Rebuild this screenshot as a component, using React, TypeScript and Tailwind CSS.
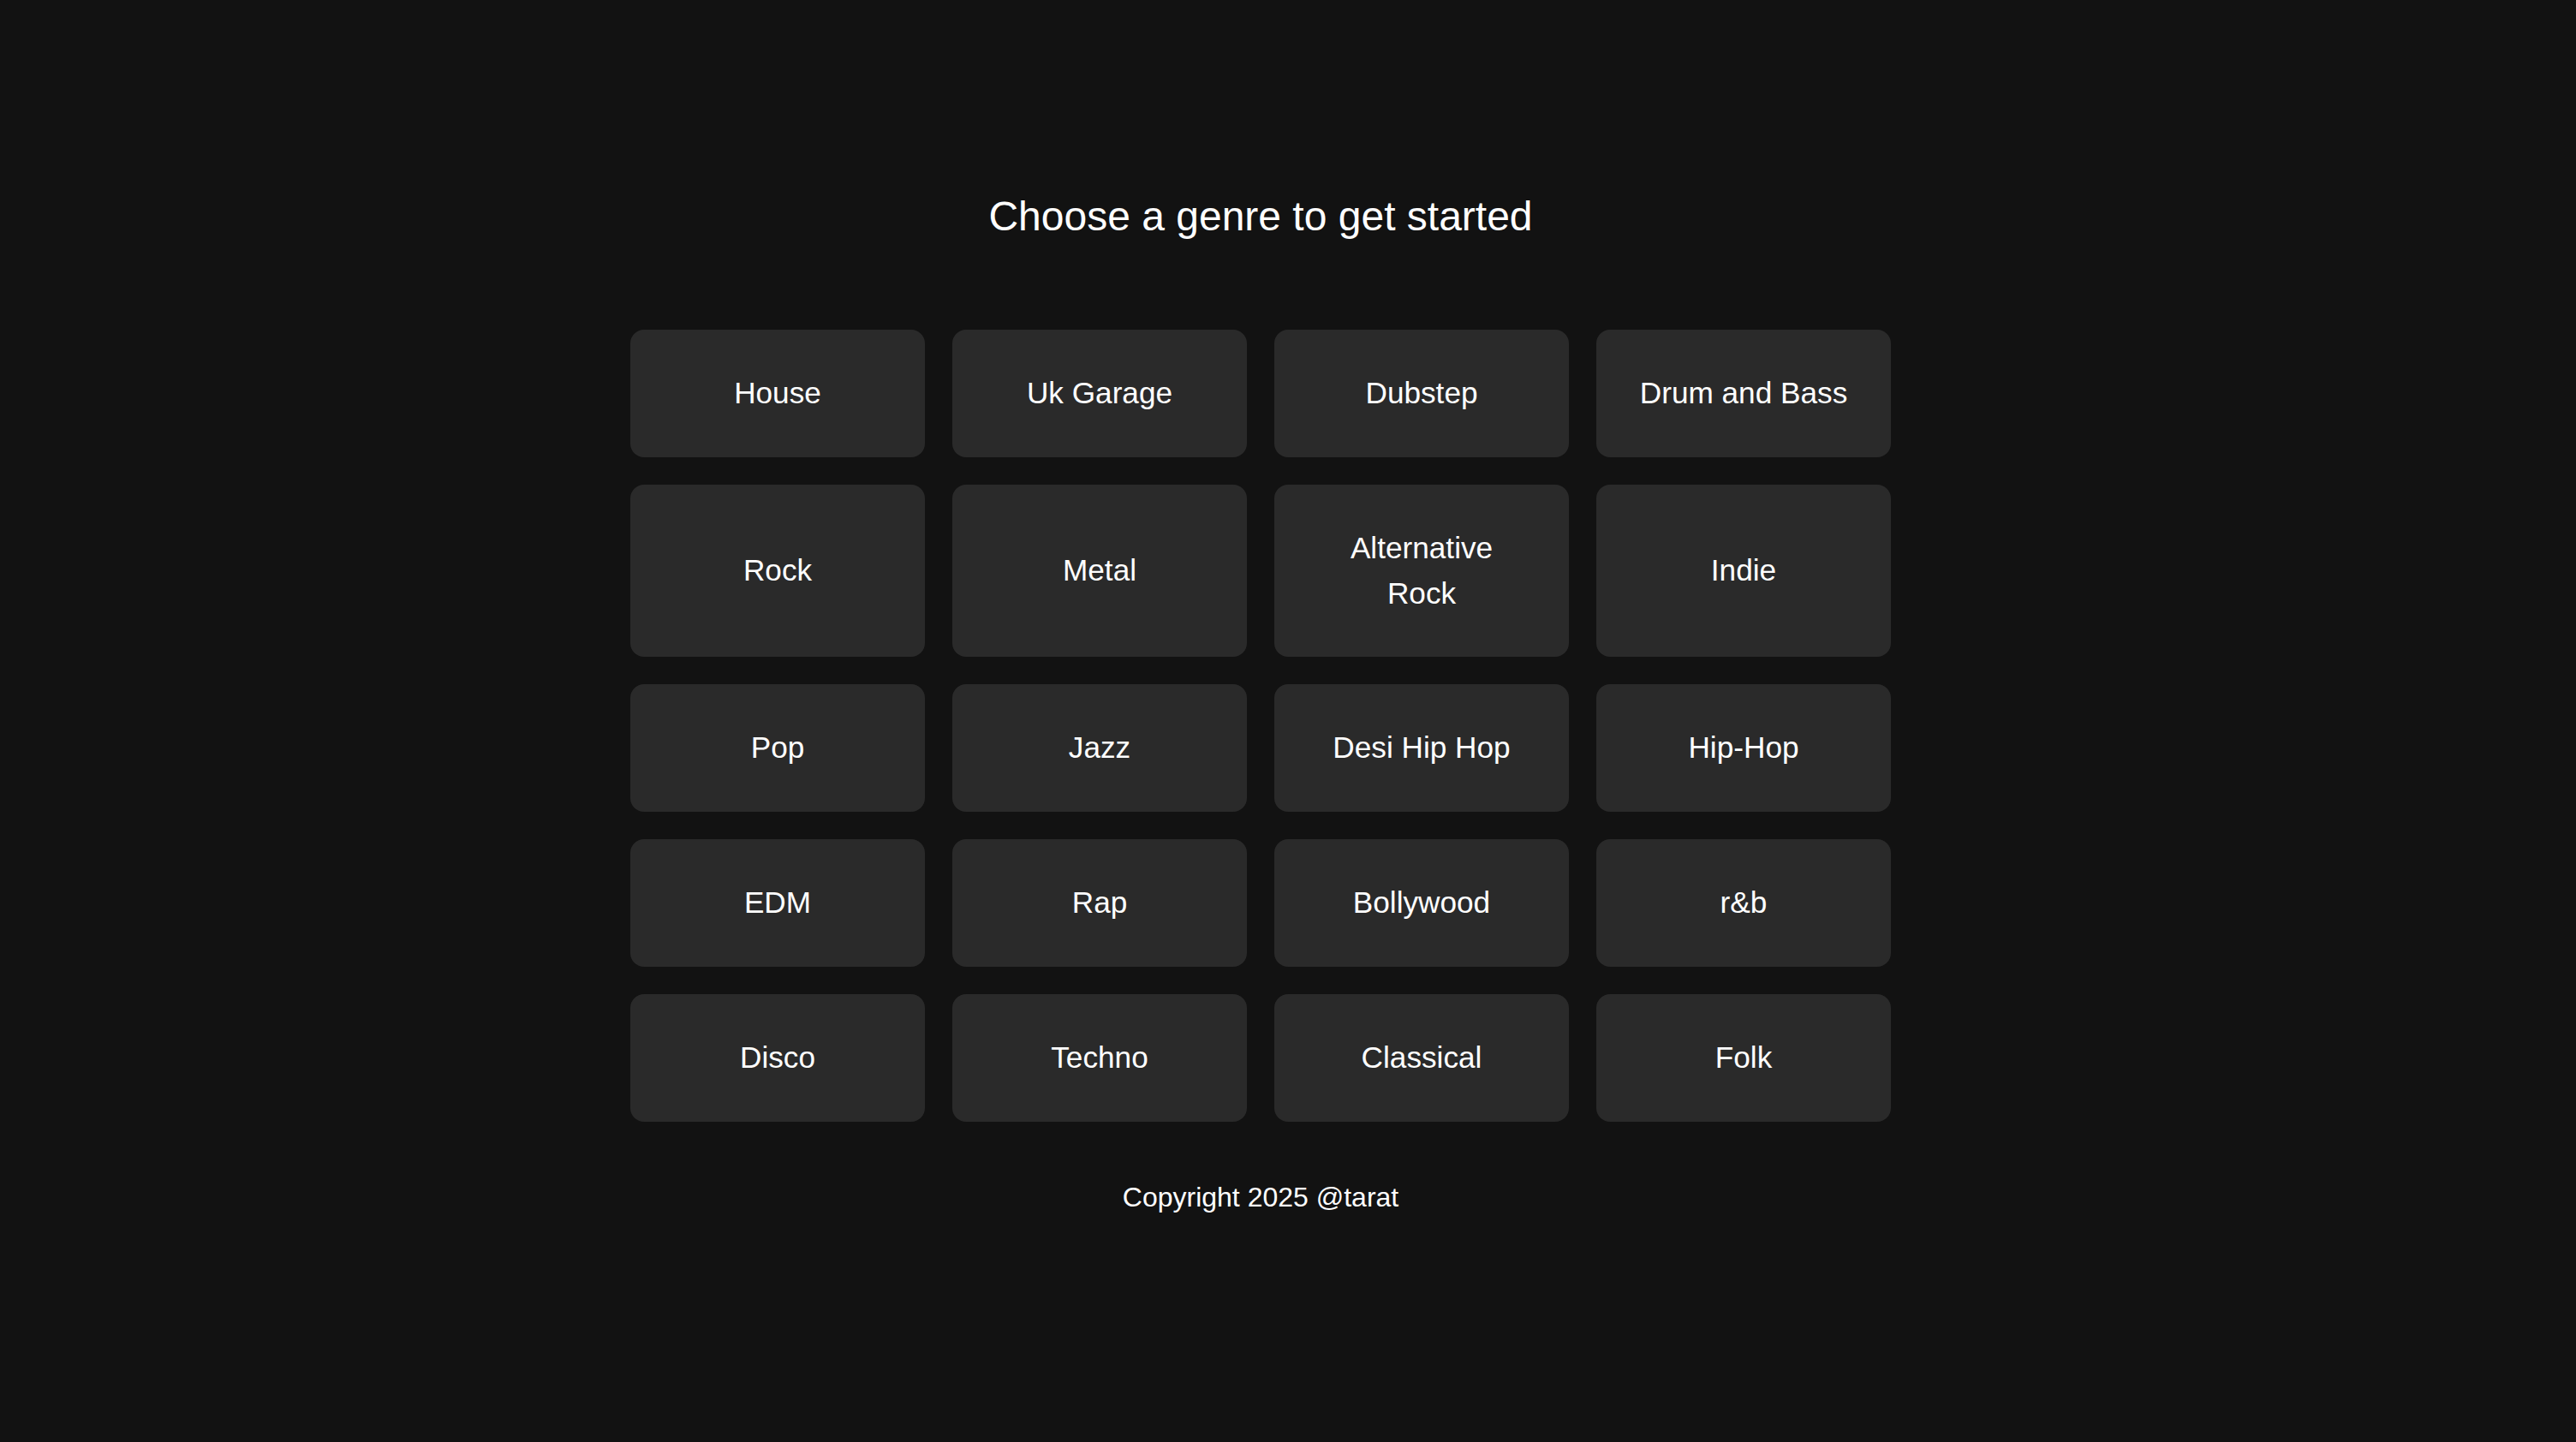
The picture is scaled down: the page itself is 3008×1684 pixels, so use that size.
import React from "react";

const genres = [
  "House",
  "Uk Garage",
  "Dubstep",
  "Drum and Bass",
  "Rock",
  "Metal",
  "Alternative Rock",
  "Indie",
  "Pop",
  "Jazz",
  "Desi Hip Hop",
  "Hip-Hop",
  "EDM",
  "Rap",
  "Bollywood",
  "r&b",
  "Disco",
  "Techno",
  "Classical",
  "Folk",
];

export default function App() {
  return (
    <div
      className="min-h-[1684px] w-full bg-[#121212] text-white flex justify-center"
      style={{ fontFamily: '"Liberation Sans", Arial, sans-serif' }}
    >
      <div className="mr-[64px] flex flex-col items-center pt-[217px]">
        <h1 className="text-[48px] leading-[1.5] font-normal text-white mb-[96px]">
          Choose a genre to get started
        </h1>
        <div className="grid grid-cols-[repeat(4,344px)] gap-8">
          {genres.map((g) => (
            <div
              key={g}
              className="bg-[#2a2a2a] rounded-2xl p-12 flex items-center justify-center text-center text-[35.2px] leading-[1.5] text-white"
            >
              {g}
            </div>
          ))}
        </div>
        <p className="mt-16 text-[32px] leading-[1.5] text-white">Copyright 2025 @tarat</p>
      </div>
    </div>
  );
}
